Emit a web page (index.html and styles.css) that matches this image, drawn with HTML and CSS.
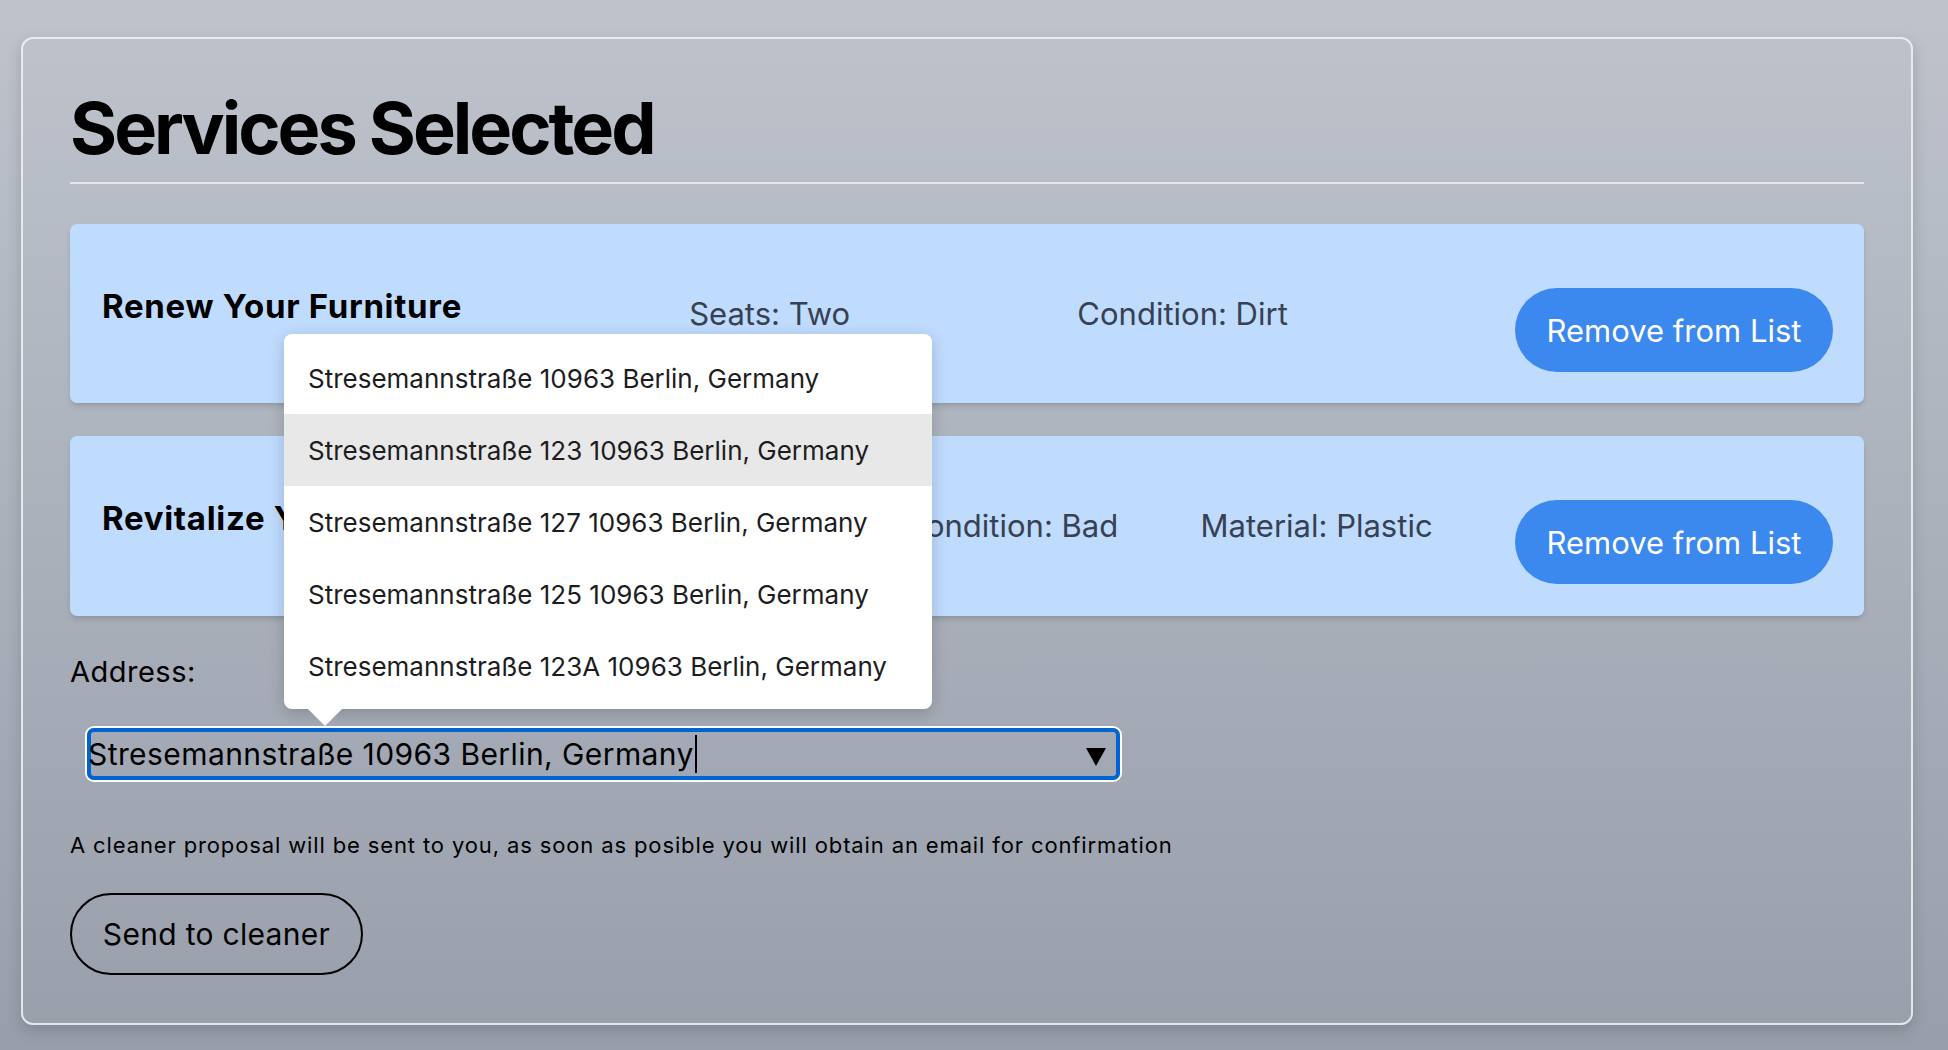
FILE: index.html
```html
<!DOCTYPE html>
<html lang="en">
<head>
<meta charset="utf-8">
<title>Services Selected</title>
<link rel="stylesheet" href="styles.css">
</head>
<body>
<div class="panel">
  <h1 class="title">Services Selected</h1>
  <div class="list">
    <div class="card">
      <h2 class="card-title">Renew Your Furniture</h2>
      <p class="detail">Seats: Two</p>
      <p class="detail">Condition: Dirt</p>
      <button class="remove">Remove from List</button>
    </div>
    <div class="card">
      <h2 class="card-title">Revitalize Your Chairs</h2>
      <p class="detail">Type: Dining Chair</p>
      <p class="detail">Condition: Bad</p>
      <p class="detail">Material: Plastic</p>
      <button class="remove">Remove from List</button>
    </div>
  </div>
  <div class="address-label">Address:</div>
  <div class="field-wrap">
    <div class="field">
      <span class="field-text">Stresemannstraße 10963 Berlin, Germany</span><span class="caret"></span>
      <svg class="field-arrow" width="20" height="20" viewBox="0 0 20 20"><polygon points="0,1 20,1 10,19" fill="#000"/></svg>
    </div>
    <ul class="dropdown">
      <li class="option">Stresemannstraße 10963 Berlin, Germany</li>
      <li class="option option-active">Stresemannstraße 123 10963 Berlin, Germany</li>
      <li class="option">Stresemannstraße 127 10963 Berlin, Germany</li>
      <li class="option">Stresemannstraße 125 10963 Berlin, Germany</li>
      <li class="option">Stresemannstraße 123A 10963 Berlin, Germany</li>
    </ul>
  </div>
  <p class="note">A cleaner proposal will be sent to you, as soon as posible you will obtain an email for confirmation</p>
  <button class="send">Send to cleaner</button>
</div>
</body>
</html>
```

FILE: styles.css
```css
* { box-sizing: border-box; }

html, body {
  margin: 0;
  padding: 0;
}

body {
  width: 1948px;
  height: 1050px;
  overflow: hidden;
  font-family: "Inter", "Noto Sans", sans-serif;
  background: linear-gradient(180deg, #bec3cc 0%, #adb3bd 45%, #989fab 100%);
  color: #000;
}

.panel {
  margin: 37px 0 0 21px;
  width: 1892px;
  height: 988px;
  border: 2px solid rgba(240, 242, 245, 0.85);
  border-radius: 12px;
  padding: 0 47px;
  box-shadow: 0 6px 14px rgba(60, 66, 80, 0.25);
}

.title {
  margin: 53px 0 0 0;
  font-size: 72px;
  line-height: 72px;
  font-weight: 700;
  letter-spacing: -3px;
  padding-bottom: 18px;
  border-bottom: 2px solid #e4e6ea;
}

.list {
  margin-top: 40px;
  display: flex;
  flex-direction: column;
  gap: 33px;
}

.card {
  background: #bfdbfe;
  border-radius: 7px;
  min-height: 179px;
  padding: 0 31px 0 32px;
  display: flex;
  justify-content: space-between;
  align-items: flex-start;
  box-shadow: 0 4px 6px -1px rgba(0, 0, 0, 0.12), 0 2px 4px -2px rgba(0, 0, 0, 0.1);
}

.card + .card { min-height: 180px; }

.card-title {
  margin: 62px 0 0 0;
  font-size: 33px;
  line-height: 40px;
  font-weight: 700;
  letter-spacing: 0.7px;
  color: #000;
}

.detail {
  margin: 71px 0 0 0;
  font-size: 31px;
  line-height: 38px;
  color: #374151;
}

.remove {
  margin-top: 64px;
  width: 318px;
  height: 84px;
  border: none;
  border-radius: 42px;
  background: #3b88ef;
  color: #fff;
  font-family: inherit;
  font-size: 31px;
  line-height: 38px;
  padding: 2px 0 0 0;
}

.address-label {
  margin-top: 38px;
  font-size: 29px;
  line-height: 36px;
  letter-spacing: 0.5px;
  color: #000;
}

.field-wrap {
  position: relative;
  margin: 38px 0 0 17px;
  width: 1033px;
}

.field {
  height: 52px;
  border: 4px solid #0064d2;
  border-radius: 7px;
  box-shadow: 0 0 0 2px #ffffff;
  display: flex;
  align-items: center;
  font-size: 30px;
  line-height: 44px;
  color: #000;
}

.field-text {
  margin-left: -3px;
  letter-spacing: 0.42px;
  white-space: nowrap;
}

.caret {
  display: inline-block;
  width: 2px;
  height: 38px;
  background: #000;
  margin-left: 1px;
}

.field-arrow {
  margin-left: auto;
  margin-right: 10px;
  margin-top: 6px;
}

.dropdown {
  position: absolute;
  left: 197px;
  top: -394px;
  width: 648px;
  margin: 0;
  padding: 8px 0 7px 0;
  list-style: none;
  background: #fff;
  border-radius: 8px;
  box-shadow: 0 4px 16px rgba(0, 0, 0, 0.18);
}

.dropdown::after {
  content: "";
  position: absolute;
  left: 24px;
  top: 100%;
  width: 0;
  height: 0;
  border-left: 17px solid transparent;
  border-right: 17px solid transparent;
  border-top: 17px solid #fff;
}

.option {
  height: 72px;
  padding-left: 24px;
  display: flex;
  align-items: center;
  font-size: 26px;
  color: #1d1d1f;
  white-space: nowrap;
}

.option-active {
  background: #e8e8e8;
}

.note {
  margin: 51px 0 0 0;
  font-size: 22px;
  line-height: 28px;
  letter-spacing: 0.87px;
  color: #000;
}

.send {
  margin-top: 34px;
  width: 293px;
  height: 82px;
  border: 2px solid #000;
  border-radius: 41px;
  background: transparent;
  font-family: inherit;
  font-size: 30px;
  line-height: 36px;
  letter-spacing: 0.3px;
  color: #000;
  padding: 0;
}
```
